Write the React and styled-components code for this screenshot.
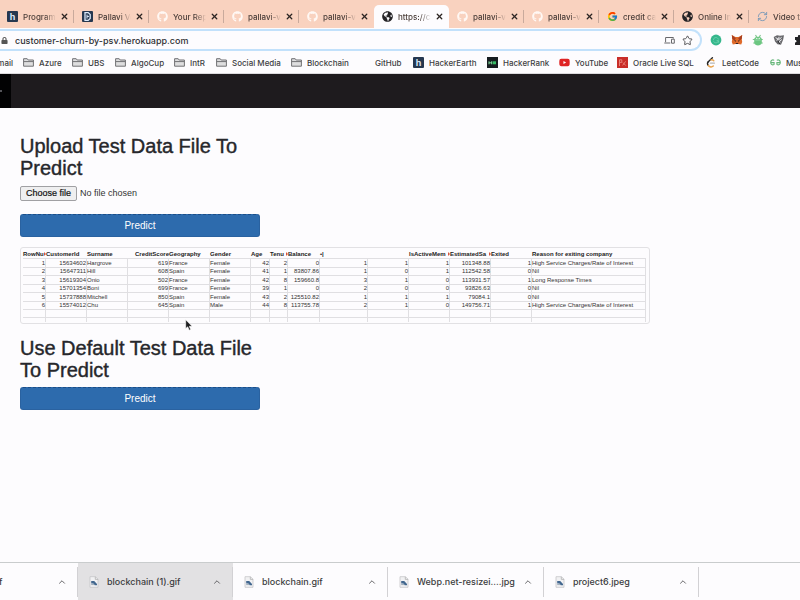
import React from "react";
import styled, { createGlobalStyle } from "styled-components";
import { FaGithub, FaGlobeAmericas, FaYoutube, FaLock } from "react-icons/fa";
import { FcGoogle } from "react-icons/fc";
import { X, Star, ChevronUp, RefreshCw } from "lucide-react";

const Global = createGlobalStyle`
  * { box-sizing: border-box; }
  body { margin: 0; background: #fdfcfe; overflow-x: hidden; }
  button, input { font: inherit; }
`;

const UI = `Inter, "Liberation Sans", sans-serif`;
const DOC = `"Liberation Sans", Arial, sans-serif`;

const Page = styled.div`
  min-height: 100vh;
  display: flex;
  flex-direction: column;
  overflow: hidden;
  color: #333;
  font-family: ${UI};
  font-size: 8px;
`;

/* ---------- tab strip ---------- */
const TabStrip = styled.nav`
  display: flex;
  height: 28px;
  margin-left: -1px;
  padding-top: 5px;
  background: #f9d2bf;
`;
const Tab = styled.div`
  flex: 0 0 75px;
  min-width: 0;
  display: flex;
  align-items: center;
  height: 23px;
  padding: 0 0 0 8px;
  border-radius: 5px 5px 0 0;
  background: ${(p) => (p.$active ? "#fdfcfe" : "transparent")};
`;
const TabIcon = styled.span`
  flex: 0 0 11px;
  height: 11px;
  display: flex;
  align-items: center;
  justify-content: center;
  margin-right: 5px;
  svg { display: block; width: 11px; height: 11px; }
`;
const TabTitle = styled.span`
  flex: 1;
  min-width: 0;
  overflow: hidden;
  white-space: nowrap;
  font-weight: 500;
  color: #4a3d38;
  mask-image: linear-gradient(to right, #000 65%, transparent);
`;
const TabClose = styled.button`
  flex: 0 0 17px;
  display: flex;
  justify-content: center;
  padding: 0;
  border: 0;
  background: none;
  color: #2c2523;
`;
const TabRule = styled.span`
  flex: 0 0 1px;
  height: 13px;
  background: ${(p) => (p.$hidden ? "transparent" : "#c9aa9c")};
`;

/* ---------- toolbar ---------- */
const Toolbar = styled.div`
  display: flex;
  align-items: center;
  height: 24px;
  background: #fdfcfe;
`;
const AddressBar = styled.div`
  flex: 1;
  display: flex;
  align-items: center;
  gap: 7px;
  height: 22px;
  padding: 0 7px 0 1px;
  border: 2px solid #c2e1fb;
  border-left: 0;
  border-radius: 0 11px 11px 0;
`;
const Address = styled.input`
  flex: 1;
  min-width: 0;
  padding: 0;
  border: 0;
  outline: 0;
  background: none;
  color: #2f2f33;
  font-size: 9px;
  font-weight: 500;
`;
const Extensions = styled.div`
  flex: 0 0 98px;
  display: flex;
  align-items: center;
  gap: 9px;
  padding-left: 8px;
  overflow: hidden;
`;
const IconButton = styled.button`
  flex: none;
  display: flex;
  padding: 0;
  border: 0;
  background: none;
  color: #4a4a4e;
`;

/* ---------- bookmarks ---------- */
const Bookmarks = styled.nav`
  display: flex;
  align-items: center;
  height: 22px;
  border-bottom: 1px solid #dcdadd;
`;
const Bookmark = styled.a`
  flex: 0 0 ${(p) => p.$width}px;
  display: flex;
  align-items: center;
  gap: 5px;
  white-space: nowrap;
  color: #3e3e42;
  text-decoration: none;
  font-weight: 500;
  svg { flex: none; display: block; }
`;
const CutBookmark = styled(Bookmark)`
  min-width: 0;
  justify-content: flex-end;
  padding-right: 10px;
`;

/* ---------- site ---------- */
const SiteBar = styled.header`
  height: 34px;
  background: #1e1b1e;
`;
const SiteTab = styled.div`
  display: flex;
  align-items: center;
  width: 11px;
  height: 34px;
  background: #020203;
  &::before {
    content: "";
    width: 2px;
    height: 2px;
    background: #55555a;
  }
`;
const Main = styled.main`
  flex: 1;
  padding: 27px 20px 20px;
  font-family: ${DOC};
`;
const Section = styled.form`
  width: 240px;
`;
const Heading = styled.h1`
  margin: 0 0 6px;
  color: #26272b;
  font-size: 20px;
  font-weight: 400;
  line-height: 22px;
  -webkit-text-stroke: 0.4px #26272b;
`;
const FileLabel = styled.label`
  display: flex;
  align-items: center;
  gap: 3px;
  height: 16px;
  margin-bottom: 13px;
  color: #333;
  font-size: 9px;
`;
const HiddenFile = styled.input`
  position: absolute;
  width: 1px;
  height: 1px;
  opacity: 0;
`;
const FileButton = styled.span`
  padding: 0 5px;
  border: 1px solid #a0a0a3;
  border-radius: 2px;
  background: #efeff0;
  color: #111;
  line-height: 13px;
  -webkit-text-stroke: 0.2px #111;
`;
const Primary = styled.button`
  display: block;
  width: 100%;
  height: 23px;
  padding: 0;
  border: 1px solid #2a62a0;
  border-top: 1px dashed #1d4f88;
  border-radius: 3px;
  background: #2d6bad;
  color: #fff;
  font-size: 10px;
`;
const SheetFrame = styled.section`
  position: relative;
  width: 630px;
  margin: 10px 0 13px;
  padding: 2px 2px 1px;
  border: 1px solid #e2e1e4;
  border-radius: 3px;
`;
const Sheet = styled.table`
  width: 623px;
  border-spacing: 0;
  table-layout: fixed;
  color: #333;
  font-size: 6px;
  line-height: 7px;
`;
const Head = styled.th`
  height: 8px;
  padding: 0;
  white-space: nowrap;
  text-align: ${(p) => (p.$right ? "right" : "left")};
  color: #222;
`;
const HeadText = styled.span`
  display: flex;
  justify-content: space-between;
`;
const CutMark = styled.i`
  flex: none;
  align-self: center;
  border: 2px solid transparent;
  border-left-color: #d8543c;
  border-right: 0;
`;
const Row = styled.tr`
  height: ${(p) => p.$height}px;
`;
const Cell = styled.td`
  padding: 0;
  border: 1px solid #e0dfe2;
  border-width: 1px 1px 0 0;
  white-space: nowrap;
  text-align: ${(p) => (p.$left ? "left" : "right")};
`;
const Cursor = styled.svg`
  position: absolute;
  left: 164px;
  top: 71px;
`;

/* ---------- downloads ---------- */
const Downloads = styled.footer`
  display: flex;
  height: 38px;
  border-top: 1px solid #c9cccd;
  font-size: 9px;
`;
const Download = styled.div`
  flex: 0 0 ${(p) => (p.$cut ? 78 : 155)}px;
  display: flex;
  align-items: center;
  gap: 8px;
  padding: 0 11px;
  background: ${(p) => (p.$active ? "#e2e1e3" : "transparent")};
  color: #3c3c40;
`;
const DownloadName = styled.span`
  flex: 1;
  white-space: nowrap;
  font-weight: 500;
  margin-left: ${(p) => (p.$cut ? -12 : 0)}px;
`;
const DownloadRule = styled.span`
  flex: 0 0 1px;
  height: 30px;
  margin: 0 -11px 0 2px;
  background: #d2d1d4;
`;

const Folder = () => (
  <svg width="11" height="11" viewBox="0 0 11 11" fill="#dededf" stroke="#717174">
    <path d="M.6 9.2V1.7h3.6l1 1.3h5.2v6.2z" />
    <path d="M.6 4.6h9.8" />
  </svg>
);
const HBadge = () => (
  <svg width="11" height="11" viewBox="0 0 11 11">
    <rect width="11" height="11" rx="1" fill="#263850" />
    <text x="5.5" y="8.8" textAnchor="middle" fontFamily="Inter" fontWeight="700" fontSize="9" fill="#dbe9fa">h</text>
  </svg>
);
const PBadge = () => (
  <svg viewBox="0 0 11 11">
    <rect width="11" height="11" rx="1" fill="#263850" />
    <path d="M3 1.6h3.2l2 2v3.8l-2 2H3z" fill="none" stroke="#dbe9fa" strokeWidth="1.3" />
    <path d="M5 3.6v4M5 5.4h2" stroke="#dbe9fa" />
  </svg>
);
const RankBadge = () => (
  <svg width="11" height="11" viewBox="0 0 11 11">
    <rect width="11" height="11" fill="#171d20" />
    <path d="M2 4.3v3M4.6 4.3v3M2 5.8h2.6" stroke="#7fd89b" />
    <rect x="5.6" y="4.3" width="3.4" height="3" fill="#37bd65" />
  </svg>
);
const OracleBadge = () => (
  <svg width="11" height="11" viewBox="0 0 11 11">
    <rect width="11" height="11" fill="#c92d29" />
    <path d="M2.5 9V2.8h2.3v2.6H2.5M5.6 8.4l3-4M6 5.6l2.8 3" fill="none" stroke="#e88078" />
  </svg>
);
const Leet = () => (
  <svg width="11" height="11" viewBox="0 0 11 11" fill="none" strokeWidth="1.4" strokeLinecap="round">
    <path d="M6.4.8 2.3 4.8" stroke="#242424" />
    <path d="M2.3 4.8c-1.2 1.3-1 2.5 0 3.7" stroke="#242424" />
    <path d="M2.3 8.5c1.6 1.8 3.5 1.9 5 .5" stroke="#e8a24a" />
    <path d="M4.4 6.1h4" stroke="#b6b6b6" />
    <path d="M5 3c1.2-.6 2-.1 2.8.7" stroke="#e8a24a" />
  </svg>
);
const Geeks = () => (
  <svg width="11" height="11" viewBox="0 0 11 11" fill="none" stroke="#65b678" strokeWidth="1.1">
    <path d="M4.2 3.4C2.4 2.2.7 3.5.7 5.5s1.7 3 3.4 1.9V5.6H1M6.8 3.4c1.8-1.2 3.5.1 3.5 2.1s-1.7 3-3.4 1.9V5.6H10" />
  </svg>
);
const Devices = () => (
  <svg width="11" height="9" viewBox="0 0 11 9" fill="none" stroke="#68686c">
    <path d="M1.6 6.2V1.5h7.8v1M.3 7h6M7.5 3.2h2.8v4H7.5z" />
  </svg>
);
const GreenDot = () => (
  <svg width="12" height="12" viewBox="0 0 12 12">
    <circle cx="6" cy="6" r="5.4" fill="#36b78c" />
    <path d="M3.4 6.2c0-3.4 4.4-3.5 5-.7M8.4 7c-.8 2.4-4 2.3-4.8.4M6.6 6.7h2v2" fill="none" stroke="#68cfac" />
  </svg>
);
const Fox = () => (
  <svg width="12" height="12" viewBox="0 0 12 12">
    <path d="M.8 1 4.5 3h3L11.2 1l-.5 4 .5 3-1 2.6L7.4 10H4.6l-2.8.6L.8 8l.5-3z" fill="#df6a2b" />
    <path d="m.8 1 4 3.2L3.5 6.5 1.3 5zM11.2 1l-4 3.2 1.3 2.3L10.7 5z" fill="#a83f20" />
    <path d="M3 6.5h2v1.2zM9 6.5H7v1.2zM4.8 9h2.4v1H4.8z" fill="#342523" />
  </svg>
);
const Bug = () => (
  <svg width="12" height="12" viewBox="0 0 12 12">
    <path d="m3.5 1 1.4 2.4M8.5 1 7.1 3.4M.8 5.5h10M1.2 9h9.6" stroke="#7dc58d" strokeWidth="1.1" />
    <path d="M2.2 5.2C2.6 2 9.4 2 9.8 5.2v3.6c-.6 3.6-7 3.6-7.6 0z" fill="#6cc681" />
    <path d="M3.3 6h5.4" stroke="#a8debb" strokeWidth=".8" />
    <circle cx="4.8" cy="4.4" r=".6" fill="#fff" /><circle cx="7.2" cy="4.4" r=".6" fill="#fff" />
  </svg>
);
const Crest = () => (
  <svg width="12" height="12" viewBox="0 0 12 12">
    <path d="M.7 3 4 1.2l3 .6 4-.6-.8 4.3L8 10.8l-3.5-.5L2 7.5z" fill="#68686c" />
    <path d="m2.5 3.7 2.3 1-1 2M6 2.8l-.4 3 3-2.5M8.8 5.6 6.6 7l.2 2.2" fill="none" stroke="#ededf0" />
    <path d="m5 7 1.8 3" stroke="#29292c" />
  </svg>
);
const Puzzle = () => (
  <svg width="12" height="12" viewBox="0 0 12 12" fill="#242427">
    <path d="M1 3h3c-.8-2.8 3-2.8 2.5 0H10v3c2.5-.5 2.5 3 0 2.6V11H1V8.4c2 .3 2-2.7 0-2.4z" />
  </svg>
);
const ImageFile = () => (
  <svg width="10" height="12" viewBox="0 0 10 12">
    <path d="M1 .7h5.5L9 3.2v8.1H1z" fill="#f1f1f3" stroke="#c5c5c8" strokeWidth=".8" />
    <path d="M6.3.8v2.6H9" fill="none" stroke="#aaa" strokeWidth=".7" />
    <path d="M2.2 5h3l2.8 3v1.2H5.7L4.4 7.6H2.2z" fill="#42678f" />
    <path d="M2.2 8.6h3" stroke="#9ca9b7" />
  </svg>
);

const github = <FaGithub color="#fff8f4" />;
const globe = <FaGlobeAmericas color="#242326" />;
const tabs = [
  ["Programming", <HBadge />],
  ["Pallavi Verma", <PBadge />],
  ["Your Repositories", github],
  ["pallavi-verma", github],
  ["pallavi-verma", github],
  ["https://customer", globe, true],
  ["pallavi-verma", github],
  ["pallavi-verma", github],
  ["credit card", <FcGoogle />],
  ["Online Image", globe],
  ["Video to GIF", <RefreshCw color="#7597b7" />],
];
const bookmarks = [
  ["Azure", 49, <Folder />],
  ["UBS", 43, <Folder />],
  ["AlgoCup", 59, <Folder />],
  ["IntR", 42, <Folder />],
  ["Social Media", 75, <Folder />],
  ["Blockchain", 84, <Folder />],
  ["GitHub", 38, null],
  ["HackerEarth", 74, <HBadge />],
  ["HackerRank", 72, <RankBadge />],
  ["YouTube", 58, <FaYoutube size={11} color="#df2424" />],
  ["Oracle Live SQL", 89, <OracleBadge />],
  ["LeetCode", 64, <Leet />],
  ["Music", 50, <Geeks />],
];
const widths = [23, 41, 41, 41, 41, 41, 19, 18, 32, 48, 41, 41, 41, 41, 114];
const heads = ["RowNu", "CustomerId", "Surname", "CreditScore", "Geography", "Gender", "Age", "Tenu", "Balance", "•|", "", "IsActiveMem", "EstimatedSa", "Exited", "Reason for exiting company"];
const cutColumns = [0, 7, 11, 12];
const leftColumns = [2, 4, 5, 14];
const heights = [9, 8, 9, 8, 9, 8, 8, 5];
const rows = [
  [1, 15634602, "Hargrove", 619, "France", "Female", 42, 2, "0", 1, 1, 1, "101348.88", 1, "High Service Charges/Rate of Interest"],
  [2, 15647311, "Hill", 608, "Spain", "Female", 41, 1, "83807.86", 1, 0, 1, "112542.58", 0, "Nil"],
  [3, 15619304, "Onio", 502, "France", "Female", 42, 8, "159660.8", 3, 1, 0, "113931.57", 1, "Long Response Times"],
  [4, 15701354, "Boni", 699, "France", "Female", 39, 1, "0", 2, 0, 0, "93826.63", 0, "Nil"],
  [5, 15737888, "Mitchell", 850, "Spain", "Female", 43, 2, "125510.82", 1, 1, 1, "79084.1", 0, "Nil"],
  [6, 15574012, "Chu", 645, "Spain", "Male", 44, 8, "113755.78", 2, 1, 0, "149756.71", 1, "High Service Charges/Rate of Interest"],
  Array(15).fill(""),
  Array(15).fill(""),
];
const downloads = [
  ["f", "cut"],
  ["blockchain (1).gif", "active"],
  ["blockchain.gif"],
  ["Webp.net-resizei....jpg"],
  ["project6.jpeg"],
];

export default function App() {
  return (
    <Page>
      <Global />
      <TabStrip>
        {tabs.map(([title, icon, active], i) => (
          <Tab key={i} $active={active}>
            <TabIcon>{icon}</TabIcon>
            <TabTitle>{title}</TabTitle>
            <TabClose aria-label="Close tab"><X size={9} strokeWidth={3.5} /></TabClose>
            <TabRule $hidden={active || tabs[i + 1]?.[2]} />
          </Tab>
        ))}
      </TabStrip>
      <Toolbar>
        <AddressBar>
          <FaLock size={7} color="#555" />
          <Address aria-label="Address" defaultValue="customer-churn-by-psv.herokuapp.com" />
          <IconButton aria-label="Send to device"><Devices /></IconButton>
          <IconButton aria-label="Bookmark this page"><Star size={11} /></IconButton>
        </AddressBar>
        <Extensions>
          {[GreenDot, Fox, Bug, Crest, Puzzle].map((Icon, i) => (
            <IconButton key={i} aria-label={`Extension ${i + 1}`}><Icon /></IconButton>
          ))}
        </Extensions>
      </Toolbar>
      <Bookmarks>
        <CutBookmark href="#mail" $width={23}>mail</CutBookmark>
        {bookmarks.map(([name, width, icon]) => (
          <Bookmark key={name} href="#" $width={width}>{icon}{name}</Bookmark>
        ))}
      </Bookmarks>
      <SiteBar><SiteTab /></SiteBar>
      <Main>
        <Section onSubmit={(e) => e.preventDefault()}>
          <Heading>Upload Test Data File To Predict</Heading>
          <FileLabel>
            <HiddenFile type="file" />
            <FileButton>Choose file</FileButton>
            No file chosen
          </FileLabel>
          <Primary>Predict</Primary>
        </Section>
        <SheetFrame>
          <Sheet>
            <colgroup>{widths.map((w, i) => <col key={i} width={w} />)}</colgroup>
            <thead>
              <tr>
                {heads.map((h, i) => (
                  <Head key={i} $right={i === 3}>
                    {cutColumns.includes(i) ? <HeadText>{h}<CutMark /></HeadText> : h}
                  </Head>
                ))}
              </tr>
            </thead>
            <tbody>
              {rows.map((row, r) => (
                <Row key={r} $height={heights[r]}>
                  {row.map((v, c) => <Cell key={c} $left={leftColumns.includes(c)}>{v}</Cell>)}
                </Row>
              ))}
            </tbody>
          </Sheet>
          <Cursor width="8" height="12" viewBox="0 0 8 12">
            <path d="M.7.8v8.8l2-1.8 1.5 3.4 1.5-.7-1.4-3.2h2.8z" fill="#1c1c1e" stroke="#fff" strokeWidth=".6" />
          </Cursor>
        </SheetFrame>
        <Section onSubmit={(e) => e.preventDefault()}>
          <Heading>Use Default Test Data File To Predict</Heading>
          <Primary>Predict</Primary>
        </Section>
      </Main>
      <Downloads>
        {downloads.map(([name, state]) => (
          <Download key={name} $cut={state === "cut"} $active={state === "active"}>
            {state !== "cut" && <ImageFile />}
            <DownloadName $cut={state === "cut"}>{name}</DownloadName>
            <IconButton aria-label={`Options for ${name}`}><ChevronUp size={10} /></IconButton>
            <DownloadRule />
          </Download>
        ))}
      </Downloads>
    </Page>
  );
}
